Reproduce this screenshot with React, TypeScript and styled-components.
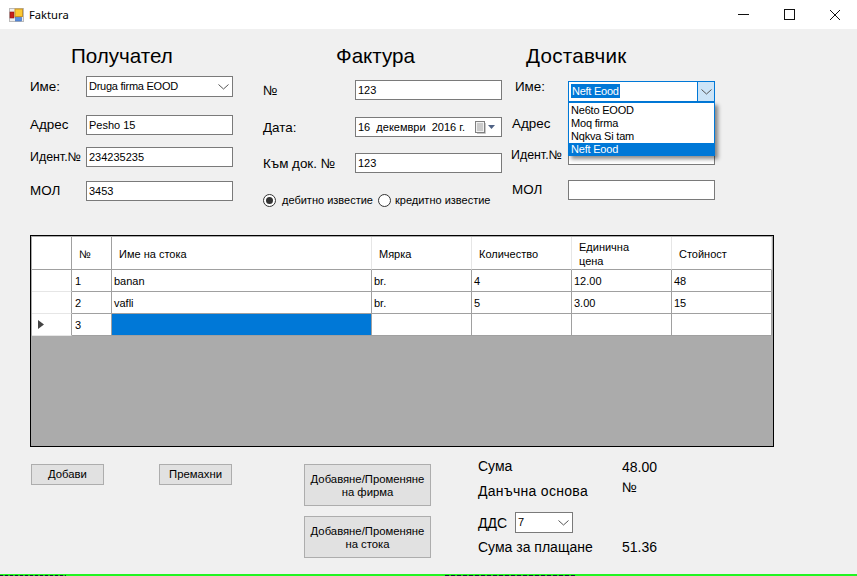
import React from "react";
import styled, { createGlobalStyle } from "styled-components";

const Sans = `"Liberation Sans", Arial, sans-serif`;
const Blue = "#0078d7";
const BoxBorder = "#7a7a7a";
const GridLine = "#a0a0a0";
const LightLine = "#e6e6e6";

const GlobalStyle = createGlobalStyle`
  html, body {
    margin: 0;
    padding: 0;
    background: #f0f0f0;
  }
  * {
    box-sizing: border-box;
  }
`;

const Window = styled.div`
  display: flex;
  flex-direction: column;
  width: 857px;
  height: 576px;
  overflow: hidden;
  background: #f0f0f0;
  color: #000;
  font-family: ${Sans};
`;

const TitleBar = styled.div`
  display: flex;
  align-items: center;
  height: 29px;
  flex: none;
  padding-left: 9px;
  background: #fff;
`;

const TitleText = styled.span`
  margin-left: 5px;
  font-family: "Noto Sans", sans-serif;
  font-size: 11.2px;
`;

const WindowButtons = styled.div`
  display: flex;
  margin-left: auto;
  margin-right: -1px;
`;

const WindowButton = styled.div`
  display: flex;
  align-items: center;
  justify-content: center;
  width: 46px;
  height: 26px;
`;

const TopForm = styled.div`
  display: grid;
  grid-template-columns: 233px 248px 1fr;
  height: 180px;
  flex: none;
  padding-left: 30px;
`;

const Column = styled.div`
  display: flex;
  flex-direction: column;
  padding-top: 15px;
`;

const Heading = styled.div<{ $indent: number; $wide?: boolean }>`
  height: 24px;
  padding-left: ${(p) => p.$indent}px;
  font-size: 20.6px;
  letter-spacing: ${(p) => (p.$wide ? 0.3 : 0)}px;
  line-height: 24px;
  white-space: nowrap;
`;

const Field = styled.div<{ $top: number; $height?: number }>`
  position: relative;
  display: flex;
  align-items: center;
  height: ${(p) => p.$height ?? 20}px;
  margin-top: ${(p) => p.$top}px;
`;

const Label = styled.div<{ $width: number; $indent?: number; $raise?: number; $small?: boolean }>`
  flex: none;
  width: ${(p) => p.$width}px;
  padding-left: ${(p) => p.$indent ?? 0}px;
  padding-bottom: ${(p) => p.$raise ?? 0}px;
  font-size: ${(p) => (p.$small ? 12.4 : 13.4)}px;
  white-space: nowrap;
`;

const TextBox = styled.input`
  width: 147px;
  height: 100%;
  padding: 0 0 1px 2px;
  border: 1px solid ${BoxBorder};
  border-radius: 0;
  outline: none;
  background: #fff;
  color: #000;
  font-family: ${Sans};
  font-size: 11px;
`;

const Combo = styled.div<{ $width?: number; $focused?: boolean }>`
  display: flex;
  align-items: center;
  justify-content: space-between;
  width: ${(p) => p.$width ?? 147}px;
  height: 100%;
  padding-left: 2px;
  border: 1px solid ${(p) => (p.$focused ? Blue : BoxBorder)};
  background: #fff;
  font-size: 11px;
  letter-spacing: -0.25px;
  white-space: nowrap;
`;

const ComboText = styled.span`
  padding-bottom: 2px;
`;

const ComboArrow = styled.div<{ $focused?: boolean }>`
  display: flex;
  align-items: center;
  justify-content: center;
  align-self: stretch;
  width: 17px;
  border-left: ${(p) => (p.$focused ? `1px solid ${Blue}` : "none")};
  background: ${(p) => (p.$focused ? "#cce4f7" : "transparent")};
`;

const SelectedText = styled.span`
  margin-bottom: 1px;
  padding: 1px;
  background: ${Blue};
  color: #fff;
`;

const DropList = styled.div`
  position: absolute;
  z-index: 2;
  top: 21px;
  left: 57px;
  width: 147px;
  padding-top: 1px;
  border: 1px solid ${Blue};
  border-bottom: none;
  background: #fff;
  box-shadow: 3px 3px 4px rgba(0, 0, 0, 0.45);
`;

const DropItem = styled.div<{ $selected?: boolean }>`
  height: 13px;
  padding-left: 2px;
  background: ${(p) => (p.$selected ? Blue : "transparent")};
  color: ${(p) => (p.$selected ? "#fff" : "#000")};
  font-size: 11px;
  letter-spacing: -0.2px;
  line-height: 13px;
  white-space: nowrap;
`;

const DateBox = styled.div`
  display: flex;
  align-items: center;
  justify-content: space-between;
  width: 147px;
  height: 100%;
  padding: 0 5px 0 2px;
  border: 1px solid ${BoxBorder};
  background: #fff;
  font-size: 11px;
  white-space: pre;
`;

const RadioRow = styled.div`
  display: flex;
  align-items: center;
  height: 18px;
  margin-top: 18px;
`;

const RadioCircle = styled.div<{ $checked?: boolean }>`
  display: flex;
  align-items: center;
  justify-content: center;
  flex: none;
  width: 13px;
  height: 13px;
  border: 1px solid #333;
  border-radius: 50%;
  background: #fff;

  &::after {
    content: "";
    display: ${(p) => (p.$checked ? "block" : "none")};
    width: 7px;
    height: 7px;
    border-radius: 50%;
    background: #333;
  }
`;

const RadioLabel = styled.span<{ $left: number; $right: number }>`
  margin-left: ${(p) => p.$left}px;
  margin-right: ${(p) => p.$right}px;
  font-size: 11px;
  white-space: nowrap;
`;

const GridFrame = styled.div`
  width: 744px;
  height: 212px;
  flex: none;
  margin: 26px 0 0 30px;
  padding: 1px;
  border: 1px solid #000;
  background: #ababab;
`;

const GridRow = styled.div`
  display: grid;
  grid-template-columns: 40px 40px 260px 100px 100px 100px 100px;
`;

const HeaderCell = styled.div<{ $line?: boolean }>`
  display: flex;
  align-items: center;
  height: 33px;
  padding: 1px 0 0 7px;
  border-right: 1px solid ${(p) => (p.$line ? GridLine : LightLine)};
  border-bottom: 1px solid ${GridLine};
  background: #fff;
  font-size: 11px;
  line-height: 14px;
`;

const RowHeader = styled.div`
  display: flex;
  align-items: center;
  height: 22px;
  padding-left: 6px;
  border-right: 1px solid ${GridLine};
  border-bottom: 1px solid ${LightLine};
  background: #fff;
`;

const Cell = styled.div<{ $active?: boolean; $indent?: number }>`
  display: flex;
  align-items: center;
  height: 22px;
  padding-left: ${(p) => p.$indent ?? 2}px;
  border-right: 1px solid ${GridLine};
  border-bottom: 1px solid ${GridLine};
  background: ${(p) => (p.$active ? Blue : "#fff")};
  font-size: 11px;
`;

const BottomForm = styled.div`
  display: flex;
  align-items: flex-start;
  flex: none;
  margin-top: 10px;
  padding-left: 31px;
`;

const PushButton = styled.div<{ $width: number; $height: number; $after?: number }>`
  display: flex;
  align-items: center;
  justify-content: center;
  flex: none;
  width: ${(p) => p.$width}px;
  height: ${(p) => p.$height}px;
  margin-right: ${(p) => p.$after ?? 0}px;
  border: 1px solid #adadad;
  background: #e1e1e1;
  font-size: 11.3px;
  line-height: 13px;
  text-align: center;
`;

const FirmButton = styled(PushButton)`
  padding-top: 2px;
`;

const SmallButtons = styled.div`
  display: flex;
  flex: none;
  margin-top: 7px;
`;

const FirmButtons = styled.div`
  display: flex;
  flex-direction: column;
  gap: 10px;
  flex: none;
  margin: 7px 47px 0 0;
`;

const Summary = styled.div`
  display: flex;
  flex-direction: column;
`;

const SummaryRow = styled.div<{ $top: number; $height?: number }>`
  display: flex;
  align-items: center;
  height: ${(p) => p.$height ?? 20}px;
  margin-top: ${(p) => p.$top}px;
  font-size: 14px;
  white-space: nowrap;
`;

const SummaryName = styled.div<{ $raise?: number; $wide?: boolean }>`
  flex: none;
  width: 144px;
  padding-bottom: ${(p) => p.$raise ?? 0}px;
  letter-spacing: ${(p) => (p.$wide ? 0.3 : 0)}px;
`;

const TaxName = styled.div`
  flex: none;
  width: 37px;
`;

const RaisedValue = styled.div`
  padding-bottom: 8px;
`;

const StatusEdge = styled.div`
  height: 2px;
  flex: none;
  margin-top: auto;
  border-top: 1px solid #22f522;
  background:
    repeating-linear-gradient(90deg, #123 0 3px, #2c2 3px 5px) 0 0 / 66px 1px no-repeat,
    repeating-linear-gradient(90deg, #123 0 4px, #2c2 4px 6px) 445px 0 / 130px 1px no-repeat,
    #22f522;
`;

const Chevron = () => (
  <svg width="11" height="6" viewBox="0 0 11 6">
    <polyline points="0.5,0.5 5.5,5 10.5,0.5" fill="none" stroke="#555" strokeWidth="1" />
  </svg>
);

const AppIcon = () => (
  <svg width="15" height="14" viewBox="0 0 15 14">
    <rect x="0.5" y="0.5" width="14" height="13" fill="#eee" stroke="#bbb" />
    <rect x="1" y="4" width="4" height="6" fill="#c8201c" stroke="#8a1512" strokeWidth="0.6" />
    <rect x="6" y="1" width="7.5" height="7.5" fill="#fcc932" stroke="#c8942a" />
    <rect x="6.5" y="9.5" width="6" height="3.5" fill="#5a8fe0" stroke="#3d6cb8" strokeWidth="0.6" />
  </svg>
);

const CalendarIcon = () => (
  <svg width="22" height="13" viewBox="0 0 22 13">
    <rect x="1.5" y="0.5" width="9" height="11" fill="#f2f2f2" stroke="#808080" />
    <path d="M3 3h6M3 5h6M3 7h6M3 9h6M4 2v8M6 2v8M8 2v8" stroke="#b5b5b5" strokeWidth="0.8" />
    <path d="M11.5 2v10.5H3" fill="none" stroke="#c8c8c8" />
    <polygon points="14,4 21,4 17.5,8" fill="#4f6285" />
  </svg>
);

const rows = [
  { no: "1", name: "banan", unit: "br.", qty: "4", price: "12.00", total: "48" },
  { no: "2", name: "vafli", unit: "br.", qty: "5", price: "3.00", total: "15" },
];

export default function App() {
  return (
    <Window>
      <GlobalStyle />
      <TitleBar>
        <AppIcon />
        <TitleText>Faktura</TitleText>
        <WindowButtons>
          <WindowButton>
            <svg width="11" height="11" viewBox="0 0 11 11">
              <path d="M0 5.5h11" stroke="#111" />
            </svg>
          </WindowButton>
          <WindowButton>
            <svg width="11" height="11" viewBox="0 0 11 11">
              <rect x="0.5" y="0.5" width="10" height="10" fill="none" stroke="#111" />
            </svg>
          </WindowButton>
          <WindowButton>
            <svg width="12" height="12" viewBox="0 0 12 12">
              <path d="M1 1l10 10M11 1L1 11" stroke="#111" />
            </svg>
          </WindowButton>
        </WindowButtons>
      </TitleBar>

      <TopForm>
        <Column>
          <Heading $indent={41}>Получател</Heading>
          <Field $top={8} $height={21}>
            <Label $width={56}>Име:</Label>
            <Combo>
              <ComboText>Druga firma EOOD</ComboText>
              <ComboArrow>
                <Chevron />
              </ComboArrow>
            </Combo>
          </Field>
          <Field $top={18}>
            <Label $width={56} $raise={2}>Адрес</Label>
            <TextBox readOnly value="Pesho 15" />
          </Field>
          <Field $top={12}>
            <Label $width={56} $small>Идент.№</Label>
            <TextBox readOnly value="234235235" />
          </Field>
          <Field $top={14}>
            <Label $width={56} $raise={2}>МОЛ</Label>
            <TextBox readOnly value="3453" />
          </Field>
        </Column>

        <Column>
          <Heading $indent={73}>Фактура</Heading>
          <Field $top={12}>
            <Label $width={92}>№</Label>
            <TextBox readOnly value="123" />
          </Field>
          <Field $top={17}>
            <Label $width={92}>Дата:</Label>
            <DateBox>
              {"16  декември  2016 г."}
              <CalendarIcon />
            </DateBox>
          </Field>
          <Field $top={16}>
            <Label $width={92}>Към док. №</Label>
            <TextBox readOnly value="123" />
          </Field>
          <RadioRow>
            <RadioCircle $checked />
            <RadioLabel $left={6} $right={5}>дебитно известие</RadioLabel>
            <RadioCircle />
            <RadioLabel $left={4} $right={0}>кредитно известие</RadioLabel>
          </RadioRow>
        </Column>

        <Column>
          <Heading $indent={15} $wide>Доставчик</Heading>
          <Field $top={13} $height={21}>
            <Label $width={57} $indent={4} $raise={10}>Име:</Label>
            <Combo $focused>
              <SelectedText>Neft Eood</SelectedText>
              <ComboArrow $focused>
                <Chevron />
              </ComboArrow>
            </Combo>
            <DropList>
              <DropItem>Ne6to EOOD</DropItem>
              <DropItem>Moq firma</DropItem>
              <DropItem>Nqkva Si tam</DropItem>
              <DropItem $selected>Neft Eood</DropItem>
            </DropList>
          </Field>
          <Field $top={13}>
            <Label $width={57} $indent={1} $raise={4}>Адрес</Label>
            <TextBox readOnly value="" />
          </Field>
          <Field $top={10}>
            <Label $width={57} $small>Идент.№</Label>
            <TextBox readOnly value="" />
          </Field>
          <Field $top={15}>
            <Label $width={57} $indent={1} $raise={2}>МОЛ</Label>
            <TextBox readOnly value="" />
          </Field>
        </Column>
      </TopForm>

      <GridFrame>
        <GridRow>
          <HeaderCell $line />
          <HeaderCell $line>№</HeaderCell>
          <HeaderCell>Име на стока</HeaderCell>
          <HeaderCell>Мярка</HeaderCell>
          <HeaderCell>Количество</HeaderCell>
          <HeaderCell>
            Единична
            <br />
            цена
          </HeaderCell>
          <HeaderCell>Стойност</HeaderCell>
        </GridRow>
        {rows.map((row) => (
          <GridRow key={row.no}>
            <RowHeader />
            <Cell $indent={3}>{row.no}</Cell>
            <Cell>{row.name}</Cell>
            <Cell>{row.unit}</Cell>
            <Cell>{row.qty}</Cell>
            <Cell>{row.price}</Cell>
            <Cell>{row.total}</Cell>
          </GridRow>
        ))}
        <GridRow>
          <RowHeader>
            <svg width="6" height="9" viewBox="0 0 6 9">
              <polygon points="0,0 6,4.5 0,9" fill="#444" />
            </svg>
          </RowHeader>
          <Cell $indent={3}>3</Cell>
          <Cell $active />
          <Cell />
          <Cell />
          <Cell />
          <Cell />
        </GridRow>
      </GridFrame>

      <BottomForm>
        <SmallButtons>
          <PushButton $width={73} $height={21} $after={55}>Добави</PushButton>
          <PushButton $width={73} $height={21} $after={72}>Премахни</PushButton>
        </SmallButtons>
        <FirmButtons>
          <FirmButton $width={127} $height={42}>
            <span>
              Добавяне/Променяне
              <br />
              на фирма
            </span>
          </FirmButton>
          <FirmButton $width={127} $height={42}>
            <span>
              Добавяне/Променяне
              <br />
              на стока
            </span>
          </FirmButton>
        </FirmButtons>
        <Summary>
          <SummaryRow $top={0}>
            <SummaryName $raise={3}>Сума</SummaryName>
            48.00
          </SummaryRow>
          <SummaryRow $top={4}>
            <SummaryName $wide>Данъчна основа</SummaryName>
            <RaisedValue>№</RaisedValue>
          </SummaryRow>
          <SummaryRow $top={11} $height={21}>
            <TaxName>ДДС</TaxName>
            <Combo $width={58}>
              <ComboText>7</ComboText>
              <ComboArrow>
                <Chevron />
              </ComboArrow>
            </Combo>
          </SummaryRow>
          <SummaryRow $top={4}>
            <SummaryName>Сума за плащане</SummaryName>
            51.36
          </SummaryRow>
        </Summary>
      </BottomForm>

      <StatusEdge />
    </Window>
  );
}
